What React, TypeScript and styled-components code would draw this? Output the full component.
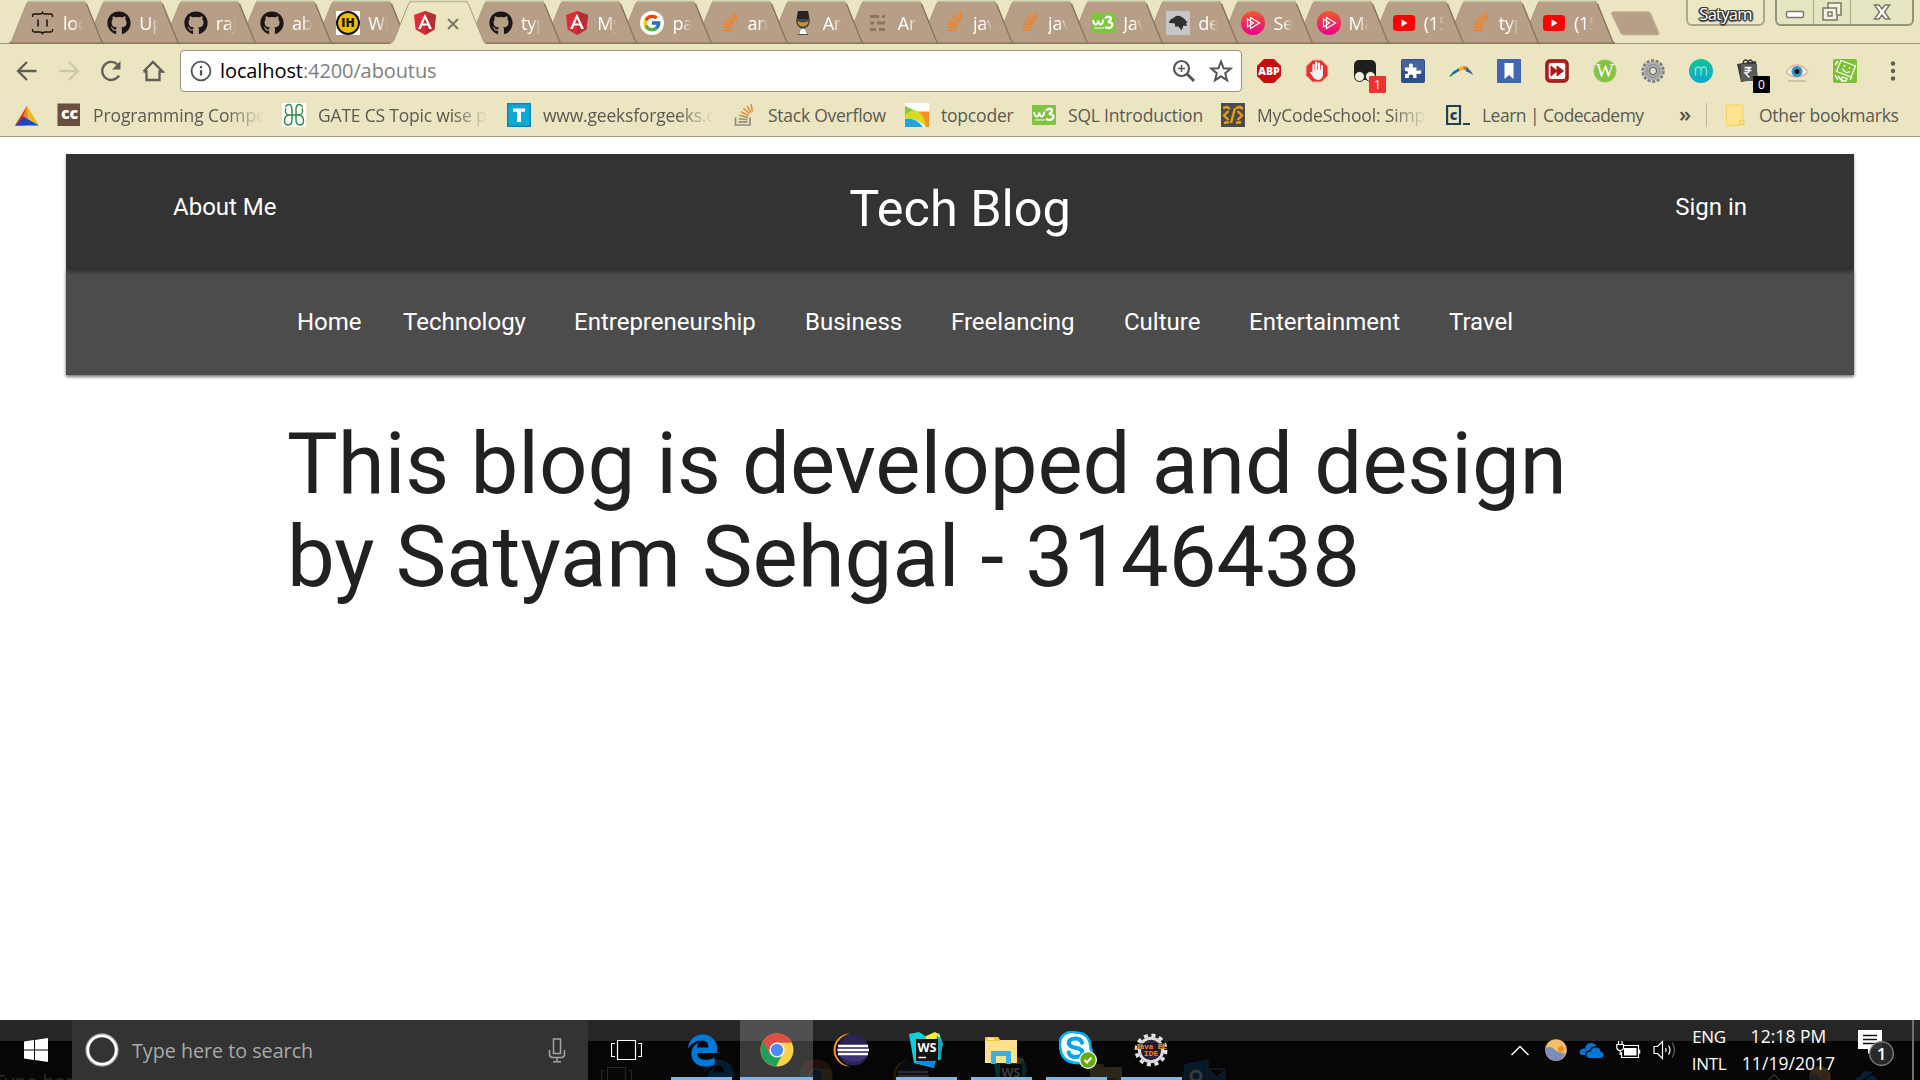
import React from "react";
import styled, { createGlobalStyle, css } from "styled-components";
import { FaGithub } from "react-icons/fa";
import { FaEdgeLegacy } from "react-icons/fa6";
import { FcGoogle } from "react-icons/fc";

const UI = `"Open Sans", "Noto Sans", sans-serif`;

const Global = createGlobalStyle`
  html, body { margin: 0; padding: 0; background: #fff; }
  * { box-sizing: border-box; }
  svg { display: block; flex: none; }
`;

const Screen = styled.div`
  width: 1920px;
  height: 1080px;
  display: flex;
  flex-direction: column;
  overflow: hidden;
  background: #fff;
`;

/* ---------- browser chrome ---------- */

const Chrome = styled.header`
  height: 137px;
  background: #ebe5c1;
  border-bottom: 1px solid #a49a80;
  font-family: ${UI};
  display: flex;
  flex-direction: column;
  flex: none;
`;

const TabStrip = styled.div`
  height: 44px;
  display: flex;
  padding-left: 8px;
  border-bottom: 1px solid #a09776;
  position: relative;
`;

const TabBox = styled.div<{ $w: number; $z: number }>`
  width: ${(p) => p.$w}px;
  height: 44px;
  flex: none;
  display: flex;
  align-items: flex-start;
  padding: 11px 0 0 23px;
  gap: 8px;
  position: relative;
  z-index: ${(p) => p.$z};
  & > :not(:first-child) { position: relative; }
`;

const TabShape = styled.svg`
  position: absolute;
  left: 0;
  top: 0;
`;

const TabTitle = styled.span`
  width: 20px;
  flex: none;
  overflow: hidden;
  white-space: nowrap;
  font-size: 18px;
  line-height: 24px;
  letter-spacing: -0.2px;
  color: #fff;
  mask-image: linear-gradient(90deg, #000 50%, transparent 100%);
`;

const CloseMark = styled.svg`
  margin: 7px 0 0 2px;
`;

const NewTab = styled.svg`
  margin: 11px 0 0 16px;
`;

const WindowControls = styled.div`
  margin-left: auto;
  padding-right: 6px;
  display: flex;
  gap: 10px;
`;

const Profile = styled.div`
  width: 79px;
  height: 26px;
  border: 2px solid #a9a88c;
  border-top: 0;
  border-radius: 0 0 6px 6px;
  background: #ece8c6;
  color: #fff;
  font-size: 16.5px;
  line-height: 27px;
  letter-spacing: -0.75px;
  text-align: center;
  text-shadow: -1px -1px 0 #333, 1px -1px 0 #333, -1px 1px 0 #333, 1px 1px 0 #333, 0 2px 1px #555, 2px 0 1px #555, -2px 0 1px #555;
`;

const WinButtons = styled.div`
  width: 139px;
  height: 26px;
  display: flex;
  border: 2px solid #8f947b;
  border-top: 0;
  border-radius: 0 0 6px 6px;
  background: #e5e5c0;
`;

const WinButton = styled.div<{ $w: number; $drop?: number }>`
  width: ${(p) => p.$w}px;
  display: flex;
  align-items: center;
  justify-content: center;
  padding-top: ${(p) => p.$drop ?? 0}px;
  & + & { border-left: 1px solid #a3a68a; }
`;

const Toolbar = styled.div`
  height: 54px;
  display: flex;
  align-items: center;
  padding: 0 13px 0 15px;
`;

const NavButtons = styled.div`
  display: flex;
  gap: 18px;
  width: 165px;
`;

const Omnibox = styled.div`
  width: 1062px;
  height: 42px;
  display: flex;
  align-items: center;
  background: #fff;
  border: 1px solid #98937a;
  border-radius: 4px;
  padding: 0 8px 0 9px;
`;

const Url = styled.div`
  margin-left: 8px;
  flex: 1;
  font-size: 20px;
  line-height: 40px;
  letter-spacing: -0.1px;
  color: #808080;
  b { font-weight: 400; color: #000; }
`;

const Extensions = styled.div`
  display: flex;
  margin-left: 15px;
`;

const Ext = styled.div`
  width: 48px;
  height: 42px;
  display: flex;
  align-items: center;
  position: relative;
`;

const ExtBadge = styled.span<{ $bg: string }>`
  position: absolute;
  left: 16px;
  top: 26px;
  width: 17px;
  height: 17px;
  border-radius: 1px;
  background: ${(p) => p.$bg};
  color: #fff;
  font-size: 12px;
  line-height: 18px;
  text-align: center;
`;

const Bookmarks = styled.div`
  height: 34px;
  display: flex;
  align-items: center;
  padding-left: 15px;
`;

const Bookmark = styled.div<{ $w: number; $gap?: number }>`
  width: ${(p) => p.$w}px;
  flex: none;
  display: flex;
  align-items: center;
  gap: ${(p) => p.$gap ?? 12}px;
`;

const BookmarkText = styled.span<{ $w: number; $ls: number; $fade?: boolean }>`
  width: ${(p) => p.$w}px;
  overflow: hidden;
  white-space: nowrap;
  font-size: 17.5px;
  line-height: 30px;
  letter-spacing: ${(p) => p.$ls}px;
  color: #5b5a52;
  ${(p) => p.$fade && css`mask-image: linear-gradient(90deg, #000 calc(100% - 36px), transparent 100%);`}
`;

const Overflow = styled.span`
  width: 27px;
  font-size: 22px;
  font-weight: 600;
  line-height: 28px;
  color: #55534b;
  padding-bottom: 4px;
`;

const Divider = styled.span`
  width: 1px;
  height: 24px;
  margin-right: 19px;
  background: #bdb697;
`;

/* ---------- blog page ---------- */

const Page = styled.main`
  height: 883px;
  flex: none;
  padding: 17px 66px 0;
  font-family: Roboto, sans-serif;
`;

const TopBar = styled.div`
  position: relative;
  height: 116px;
  display: grid;
  grid-template-columns: 1fr auto 1fr;
  background: #333;
  color: #fff;
  padding: 0 107px;
  box-shadow: 0 2px 3px rgba(0, 0, 0, 0.35);
`;

const TopLink = styled.a<{ $end?: boolean }>`
  font-size: 24px;
  line-height: 28px;
  padding-top: 39px;
  justify-self: ${(p) => (p.$end ? "end" : "start")};
`;

const Brand = styled.h1`
  margin: 0;
  font-size: 50.4px;
  font-weight: 400;
  line-height: 58px;
  padding-top: 26px;
`;

const NavBar = styled.nav`
  height: 105px;
  display: flex;
  background: #4c4c4c;
  color: #fff;
  padding: 38px 0 0 231px;
  box-shadow: 0 2px 3px rgba(0, 0, 0, 0.5), 0 0 3px rgba(0, 0, 0, 0.15);
`;

const NavItem = styled.a<{ $w: number }>`
  width: ${(p) => p.$w}px;
  flex: none;
  font-size: 24px;
  line-height: 28px;
  white-space: nowrap;
`;

const Headline = styled.h2`
  margin: 43px 0 0 221px;
  width: 1330px;
  font-size: 85.12px;
  font-weight: 400;
  line-height: 93px;
  color: #212121;
`;

/* ---------- taskbar ---------- */

const Taskbar = styled.footer`
  height: 60px;
  flex: none;
  display: flex;
  position: relative;
  overflow: hidden;
  background: linear-gradient(#262626 0 21px, #060606 21px);
  font-family: ${UI};
  color: #fff;
`;

const StartButton = styled.div`
  width: 72px;
  display: flex;
  align-items: center;
  justify-content: center;
`;

const Search = styled.div`
  width: 516px;
  display: flex;
  align-items: center;
  background: #333;
  padding: 0 22px 0 13px;
  position: relative;
`;

const SearchText = styled.span`
  flex: 1;
  margin-left: 13px;
  font-size: 19.7px;
  line-height: 30px;
  letter-spacing: 0;
  color: #a9a9a9;
  padding-top: 2px;
`;

const TaskButton = styled.div<{ $w: number; $open?: boolean; $active?: boolean; $inset?: number; $nudge?: number }>`
  width: ${(p) => p.$w}px;
  display: flex;
  align-items: center;
  justify-content: center;
  padding-left: ${(p) => p.$nudge ?? 0}px;
  position: relative;
  ${(p) => p.$active && css`background: linear-gradient(#505050 0 21px, #3a3a3a 21px);`}
  ${(p) =>
    p.$open &&
    css`
      &::after {
        content: "";
        position: absolute;
        bottom: 0;
        left: ${p.$active ? 0 : p.$inset ?? 8}px;
        width: ${p.$active ? p.$w : 61}px;
        height: 3px;
        background: #76b9ed;
      }
    `}
`;

const Tray = styled.div`
  margin-left: auto;
  display: flex;
  align-items: center;
`;

const TrayIcon = styled.div<{ $w: number }>`
  width: ${(p) => p.$w}px;
  display: flex;
`;

const TrayText = styled.div<{ $w: number; $ls: number; $size: number; $pad?: number }>`
  width: ${(p) => p.$w}px;
  padding-right: ${(p) => p.$pad ?? 0}px;
  font-size: ${(p) => p.$size}px;
  line-height: 27px;
  letter-spacing: ${(p) => p.$ls}px;
  text-align: center;
  white-space: nowrap;
`;

const ShowDesktop = styled.div`
  width: 8px;
  align-self: stretch;
  border-left: 2px solid #707070;
`;

const Reflection = styled.div<{ $x: number; $y: number; $o?: number }>`
  position: absolute;
  left: ${(p) => p.$x}px;
  top: ${(p) => p.$y}px;
  opacity: ${(p) => p.$o ?? 0.15};
  font-size: 19.5px;
  line-height: 24px;
  white-space: nowrap;
`;

/* ---------- drawings ---------- */

const Svg = ({ s = 24, w, children, vb = "0 0 24 24" }: { s?: number; w?: number; vb?: string; children: React.ReactNode }) => (
  <svg width={w ?? s} height={s} viewBox={vb} fill="none">{children}</svg>
);

const Github = () => <FaGithub size={24} color="#181616" />;

const Angular = () => (
  <Svg>
    <path d="M12 0 23 4 21.400 18.500 12 24 2.600 18.500 1 4Z" fill="#dd2c38" />
    <path d="M12 0 23 4 21.400 18.500 12 24Z" fill="#b52e31" />
    <path d="M12 2.700 5 18H7.800L9.300 14.600H14.700L16.200 18H19ZM12 7.500 14 12.500H10Z" fill="#fff" fillRule="evenodd" />
  </Svg>
);

const Google = () => (
  <Svg>
    <circle cx="12" cy="12" r="12" fill="#fff" />
    <svg x="2" y="2" width="20" height="20" viewBox="0 0 48 48"><FcGoogle size={48} /></svg>
  </Svg>
);

const StackOverflow = ({ pale }: { pale?: boolean }) => (
  <Svg>
    {pale ? (
      <path d="M3.500 14.500V22H18V14.500" stroke="#8f8a84" strokeWidth="1.700" />
    ) : (
      <path d="M4 17V21.500H17.500V17" stroke="#a5a3a6" strokeWidth="1.400" />
    )}
    <g stroke={pale ? "#a58f68" : "#f48024"} strokeWidth="1.600">
      <path d="M6.500 19H15.500" stroke={pale ? "#8d8577" : "#f48024"} />
      <path d="M6.700 15.700 15.600 16.800M7.500 12.200 16 14.700" />
    </g>
    <g stroke={pale ? "#e0933a" : "#f48024"} strokeWidth="1.600"><path d="M9 8.700 16.600 12.800M11.500 5.300 17.700 10.800M15 2.800 19 9.700M19 1 20.500 8.500" /></g>
  </Svg>
);

const Brackets = () => (
  <Svg>
    <path d="M1.500 6V4.500Q1.500 3 3.500 3H9Q11 3 11.500 1.500Q12 3 14 3H19.500Q21.500 3 21.500 4.500V6M1.500 18V19.500Q1.500 21 3.500 21H9Q11 21 11.500 22.500Q12 21 14 21H19.500Q21.500 21 21.500 19.500V18" stroke="#16110e" strokeWidth="1.300" />
    <path d="M7 8.500V15.500M16 8.500V15.500" stroke="#16110e" strokeWidth="1.500" />
  </Svg>
);

const Letters = ({ x = 12, y, size, fill = "#fff", weight = 700, children, font = "Open Sans" }: any) => (
  <text x={x} y={y} fontSize={size} fill={fill} fontWeight={weight} fontFamily={font} textAnchor="middle">{children}</text>
);

const IndieHack = () => (
  <Svg>
    <rect width="24" height="24" fill="#fff" />
    <circle cx="12" cy="12" r="11" fill="#f2bb05" stroke="#111" strokeWidth="2" />
    <Letters y="16.300" size="12" fill="#111" weight={800}>IH</Letters>
  </Svg>
);

const Lamp = () => (
  <Svg>
    <path d="M7 0H17L19 10Q18 16 14 17L17 24H7L10 17Q6 16 5 10Z" fill="#4a4642" />
    <path d="M7 0H17L18 8H6Z" fill="#262424" />
    <path d="M6.500 10Q12 13 17.500 10Q17 15 12 15.500Q7 15 6.500 10" fill="#c8952d" />
    <path d="M8 23 9.500 18.500Q12 16.500 14.500 18.500L16 23Z" fill="#fff" />
  </Svg>
);

const Dashes = () => (
  <Svg>
    <path d="M4 5.500H13M16 5.500H19M4 12H8M11 12H19M4 18.500H10M13 18.500H19" stroke="#8a7565" strokeWidth="2.800" />
  </Svg>
);

const W3 = () => (
  <Svg>
    <rect y="2" width="24" height="20" rx="1" fill="#80c341" />
    <path d="M2 9Q3 14 5 13.500Q7 13 7.300 9.500Q8 14 10 13.500Q12 12.500 12.300 8.500" stroke="#fff" strokeWidth="1.900" />
    <path d="M14 7.500Q17 4.500 19.500 6.500Q21 9.500 17 11Q22 11 21.300 14.500Q19.500 18.500 14 16" stroke="#fff" strokeWidth="2.300" />
    <path d="M3 17H13" stroke="#fff" strokeWidth=".9" />
  </Svg>
);

const Bird = () => (
  <Svg>
    <rect width="24" height="24" fill="#c6c5c7" />
    <path d="M3 12Q3.500 8 7.500 7Q10 4 14 5L18 7.500 21.500 11.500 20 12 21 15 17.500 14.500 15.500 19.500 12.500 15.500 9 15.500 9 12.500 5 12Z" fill="#303033" />
  </Svg>
);

const Pluralsight = () => (
  <Svg>
    <defs><linearGradient id="ps" x1="0" y1="0" x2="0" y2="1"><stop stopColor="#f15b2a" /><stop offset="1" stopColor="#ec008c" /></linearGradient></defs>
    <circle cx="12" cy="12" r="12" fill="url(#ps)" />
    <path d="M9.500 6.500 18.500 12 9.500 17.500ZM6.500 8V16L12.500 12Z" stroke="#fff" strokeWidth="1.200" />
  </Svg>
);

const Youtube = () => (
  <Svg>
    <rect x="1" y="4" width="22" height="16" rx="3.500" fill="#f00" />
    <path d="M9.500 8.300 15.500 12 9.500 15.700Z" fill="#fff" />
  </Svg>
);

const GG = () => (
  <Svg>
    <rect width="24" height="24" fill="#fff" />
    <path d="M3.500 4Q5 1 7.500 1.500Q10 2.500 10 7V16Q10 22 6.500 22Q2.500 22 2.500 18Q2.500 12.500 7 12H17Q21.500 12.500 21.500 18Q21.500 22 17.500 22Q14 22 14 16V7Q14 2.500 16.500 1.500Q19 1 20.500 4" stroke="#2f8d46" strokeWidth="1.500" />
    <path d="M4 5Q2 11 7 12M20 5Q22 11 17 12" stroke="#2f8d46" strokeWidth="1.300" />
  </Svg>
);

const Topcoder = () => (
  <Svg>
    <rect width="24" height="24" fill="#fff" />
    <path d="M0 3Q10 6 17 15L10 12 0 14Z" fill="#8cc43c" />
    <path d="M13 8.500H24V24H20Q19 15 13 8.500" fill="#f7901e" />
    <path d="M0 12Q8 5 14 9Q20 14 21 24Q12 14 0 16Z" fill="#d3dd26" />
    <path d="M0 16Q11 14 18 24H0Z" fill="#24a4dc" />
  </Svg>
);

const Prism = () => (
  <Svg>
    <path d="M12 3 0 22.500H10L12 12Z" fill="#d42a1d" />
    <path d="M12 3 24 22.500 14.500 17Z" fill="#f0b61c" />
    <path d="M12 3 8 13 14 17.500Z" fill="#f08a1a" />
    <path d="M0 22.500 9 14 24 22.500Z" fill="#1a45c8" />
  </Svg>
);

const CC = () => (
  <Svg>
    <rect x=".5" y=".5" width="22.500" height="22.500" fill="#6b4f3e" />
    <Letters x={12.500} y="16.300" size="16" weight={800}>cc</Letters>
  </Svg>
);

const TLetter = () => (
  <Svg>
    <rect x=".75" y=".75" width="22.500" height="22.500" fill="#0fa9d8" stroke="#0b86b4" strokeWidth="1.500" />
    <path d="M6 5.500H18V8.800H14V19H10V8.800H6Z" fill="#fff" />
  </Svg>
);

const CodeSchool = () => (
  <Svg>
    <rect width="24" height="24" fill="#4a4b4d" />
    <path d="M2 5 6 4 9 6M15 5 19 4 22 6M3 20 8 19M15 20 20 19" stroke="#e79d12" strokeWidth="2.600" />
    <path d="M7.500 8 3 12.500 7.500 17M16.500 8 21 12.500 16.500 17M14 5 10 20" stroke="#e79d12" strokeWidth="2.400" />
  </Svg>
);

const Codecademy = () => (
  <Svg>
    <path d="M1.100 3H14V21H1.100Z" stroke="#204056" strokeWidth="2.200" />
    <path d="M17 21H24" stroke="#204056" strokeWidth="2" />
    <Letters x={7.500} y="16.500" size="14" fill="#204056" weight={800}>c</Letters>
  </Svg>
);

const FolderMini = () => (
  <Svg>
    <path d="M.5 2H17V18.500L13 22.500H.5Z" fill="#ffe48f" stroke="#f5d262" />
    <path d="M14 17.500Q17.500 16 18 18V21.500H13.500Z" fill="#ffe48f" stroke="#ecc23e" />
  </Svg>
);

const octagon = "M7 0H17L24 7V17L17 24H7L0 17V7Z";

const extensionIcons: { icon: React.ReactNode; badge?: [string, string] }[] = [
  { icon: <Svg><path d={octagon} fill="#c70d0d" /><Letters y="16" size="10.500" weight={800}>ABP</Letters></Svg> },
  {
    icon: (
      <Svg>
        <path d="M7.500 1H16.500L23 7.500V16.500L16.500 23H7.500L1 16.500V7.500Z" fill="#e5302b" stroke="#f6b8a8" />
        <path d="M8.500 13V6M11.300 12V3.500M14.100 12V4.500M16.900 13V7" stroke="#fff" strokeWidth="2.100" strokeLinecap="round" />
        <path d="M7.500 11H18V16Q17 21 13 21Q10 21 8 18L5 13.500Q6 12 8 14Z" fill="#f4f4f4" />
      </Svg>
    ),
  },
  {
    badge: ["#ee3131", "1"],
    icon: <Svg><rect x="1" y="1" width="22" height="20" rx="5" fill="#1e1e1e" /><circle cx="6.500" cy="17.500" r="5" fill="#f2efe0" stroke="#1e1e1e" /><circle cx="17.500" cy="17.500" r="5" fill="#f2efe0" stroke="#1e1e1e" /></Svg>,
  },
  {
    icon: (
      <Svg>
        <rect width="24" height="24" rx="2" fill="#2f4f8f" /><rect x="1" y="1" width="22" height="11" rx="1" fill="#43659f" />
        <path d="M4 8.500H8.500Q7 4.500 10 4.500Q13 4.500 11.500 8.500H15.500V12Q20.500 10 20.500 13Q20.500 16 15.500 14.500V19H12Q13 15.500 10 15.500Q7 15.500 8 19H4V15Q7 15.500 7 13.500Q7 11.500 4 12Z" fill="#fff" />
      </Svg>
    ),
  },
  {
    icon: (
      <Svg>
        <path d="M1 17.500Q4 13.500 10 10.500" stroke="#2a9d55" strokeWidth="2" />
        <path d="M3 12.500Q5.500 10 9 9.500" stroke="#1767b2" strokeWidth="0" />
        <path d="M4 14.500Q7 12 10.500 10.300" stroke="#1767b2" strokeWidth="2.500" />
        <path d="M10 10.500Q12 9.300 14.500 9" stroke="#f4b21c" strokeWidth="3.400" />
        <path d="M14.300 9Q17 8.800 18.500 10.300" stroke="#e8632e" strokeWidth="3.400" />
        <path d="M17.500 8.500Q22 11 24 16Q20.500 13 17 12.500Z" fill="#1767b2" />
      </Svg>
    ),
  },
  { icon: <Svg><rect width="24" height="24" fill="#4066b4" /><path d="M7.500 4H16.500V20L12 16 7.500 20Z" fill="#fff" /></Svg> },
  {
    icon: (
      <Svg>
        <rect x="1" y="1" width="22" height="22" rx="4" fill="#c02020" stroke="#8b1515" strokeWidth="1.500" />
        <rect x="3.800" y="4" width="16.400" height="16" rx="2" fill="#fff" />
        <path d="M6 7 12 12 6 17ZM12 7 18.500 12 12 17Z" fill="#a81818" stroke="#a81818" />
      </Svg>
    ),
  },
  { icon: <Svg><circle cx="12" cy="12" r="11.200" fill="#82c341" stroke="#a9cc74" strokeWidth=".8" /><Letters y="18.300" size="19" weight={400} font="Liberation Serif">W</Letters></Svg> },
  {
    icon: (
      <Svg>
        <circle cx="12" cy="12" r="10" stroke="#7c7c7c" strokeWidth="3.500" strokeDasharray="3 1.490" />
        <circle cx="12" cy="12" r="6.500" stroke="#adadad" strokeWidth="6" />
        <circle cx="12" cy="12" r="6.500" stroke="#8b8b8b" strokeWidth="1" />
        <circle cx="12" cy="12" r="3.500" stroke="#666" strokeWidth="1.200" fill="#e4dfca" />
      </Svg>
    ),
  },
  {
    icon: (
      <Svg>
        <defs><linearGradient id="mm" x1="0" y1="0" x2="0" y2="1"><stop stopColor="#0fc29c" /><stop offset="1" stopColor="#11a8cf" /></linearGradient></defs>
        <circle cx="12" cy="12" r="12" fill="url(#mm)" />
        <path d="M6.500 16.500V8.500M6.500 11Q7 8 9.500 8Q12 8 12 11V16.500M12 11Q12.500 8 15 8Q17.500 8 17.500 11V16.500" stroke="#7be6df" strokeWidth="1.300" />
      </Svg>
    ),
  },
  {
    badge: ["#000", "0"],
    icon: (
      <Svg>
        <path d="M0 5 19 2 21 20 4 23Z" fill="#3c3c3c" /><path d="M4 5H20V22H4Z" fill="#5a5a5a" />
        <path d="M6 5Q6 1 9 1Q11 1 11 5M11 5Q11 1 14 1Q16 2 16 5" stroke="#333" strokeWidth="1.300" />
        <path d="M7.500 8.500H14.500M7.500 11.500H14.500M7.500 8.500Q12.500 8.500 12.500 11Q12.500 14 8 14L12.500 18.500" stroke="#fff" strokeWidth="1.400" />
      </Svg>
    ),
  },
  {
    icon: (
      <Svg>
        <path d="M1 13Q6 6 12 6Q18 6 23 13Q18 18 12 18Q6 18 1 13" fill="#f3efe6" stroke="#d6b49b" strokeWidth="1.300" />
        <circle cx="12" cy="12.500" r="5.500" fill="#3c93c2" /><circle cx="12" cy="12.500" r="2.500" fill="#0a1b28" />
        <path d="M3 22H21" stroke="#c9c4aa" strokeWidth="2" />
      </Svg>
    ),
  },
  {
    icon: (
      <Svg>
        <rect width="24" height="24" rx="2" fill="#7dbf36" />
        <path d="M8 1.500 22.500 7 18 18 3.500 12.500Z" stroke="#fff" strokeWidth="1.300" />
        <path d="M9.500 9.500Q12 15.500 17 12.500M11.500 6V8M16.500 8V10M2 16 5 21M5 17 9 22M9 18 14 19.500 13 22H9ZM17 21 19 18M2 6 5 2" stroke="#fff" strokeWidth="1.300" />
      </Svg>
    ),
  },
];

const EdgeIcon = () => <FaEdgeLegacy size={33} color="#0078d7" />;

const ChromeIcon = () => (
  <Svg s={34} vb="0 0 34 34">
    <circle cx="17" cy="17" r="16.500" fill="#fdd249" />
    <path d="M17 17 3 8.500A16.500 16.500 0 0 0 16 33.500L23 20Z" fill="#1fa15d" />
    <path d="M2.700 8.800A16.500 16.500 0 0 1 32 9.700H17L10 21Z" fill="#dd5145" />
    <circle cx="17" cy="17" r="7.600" fill="#fff" /><circle cx="17" cy="17" r="6.200" fill="#4c8bf5" />
  </Svg>
);

const EclipseIcon = () => (
  <Svg s={34} w={36} vb="0 0 36 34">
    <path d="M17 .5A16.500 16.500 0 0 0 17 33.500A19 17 0 0 1 17 .5" fill="#f7941e" />
    <circle cx="20.500" cy="17" r="15.500" fill="#2c2255" />
    <path d="M6 20H35Q32 28 21 29Q9 28 6 20" fill="#40327a" />
    <path d="M5 13H35M4.500 17H36M5 21H35" stroke="#fff" strokeWidth="2.300" />
  </Svg>
);

const WebStormIcon = () => (
  <Svg s={36} w={34} vb="0 0 34 36">
    <path d="M0 2 10 0 18 5 30 1 34 12 31 20 32 27 26 30 25 36 5 31Z" fill="#12cdd4" />
    <path d="M17 4 26 0 31 3 28 12H16Z" fill="#f3ec3f" /><path d="M28 3 34 12 31 27 26 20Z" fill="#14a7b8" />
    <path d="M5 30 25 28V36Z" fill="#0a86e8" />
    <rect x="7" y="7" width="22" height="22" fill="#111" />
    <Letters x={18} y="19.500" size="12.500">WS</Letters>
    <path d="M9.500 25.500H17" stroke="#fff" strokeWidth="1.500" />
  </Svg>
);

const FolderIcon = () => (
  <Svg s={27} w={32} vb="0 0 32 27">
    <path d="M0 1.500Q0 0 1.500 0H13L15 3H32V26H0Z" fill="#fce08a" />
    <path d="M0 1.500Q0 0 1.500 0H13L15 4H0Z" fill="#f8c43a" /><path d="M2.500 2H9" stroke="#fff" strokeWidth="1.400" />
    <path d="M6 27V14H26V27H21V19H11V27Z" fill="#36b2ea" />
  </Svg>
);

const SkypeIcon = () => (
  <Svg s={38} w={38} vb="0 0 38 38">
    <path d="M9 1.500Q14 0 17 1.500Q31 2 31.500 17Q34 21 31.500 28Q27 34 20 32Q3 32 1.500 18Q-1.500 5 9 1.500" fill="#fff" stroke="#00aff0" strokeWidth="2.600" />
    <path d="M23 11.500Q21.500 7.500 16.500 7.500Q10 7.500 9.800 12Q9.800 15.500 16.500 16.700Q23.500 18 23.500 21.500Q23 26 16.500 26Q11 26 9.800 21.500" stroke="#00a5e8" strokeWidth="4.200" strokeLinecap="round" />
    <circle cx="29" cy="29" r="8.300" fill="#63ab0f" stroke="#fff" strokeWidth="1.300" />
    <path d="M25.500 29 28 31.500 32.500 26.500" stroke="#fff" strokeWidth="2" />
  </Svg>
);

const JavaIcon = () => (
  <Svg s={34} w={34} vb="0 0 34 34">
    <circle cx="17" cy="17" r="14.700" stroke="#e4e4e4" strokeWidth="3.500" strokeDasharray="4 3.700" />
    <circle cx="17" cy="17" r="11.700" fill="#2a2440" stroke="#dadada" strokeWidth="3" />
    <path d="M3 10H31V16H26V23H9V16H3Z" fill="#1a1320" opacity=".65" />
    <Letters x={17} y="15.500" size="7.500" fill="#f58a1f" font="Liberation Mono">Java EE</Letters>
    <Letters x={17} y="23" size="8" fill="#f58a1f" font="Liberation Mono">IDE</Letters>
  </Svg>
);

const TaskViewIcon = () => (
  <Svg s={20} w={31} vb="0 0 31 20"><path d="M6.500.5H24.500V19.500H6.500ZM4 3.500H.5V16.500H4M27 3.500H30.500V16.500H27" stroke="#fff" strokeWidth="1.200" /></Svg>
);

const ChevronIcon = () => <Svg s={11} w={20} vb="0 0 20 11"><path d="M1.500 10 10 1.500 18.500 10" stroke="#fff" strokeWidth="1.500" /></Svg>;

const SphereIcon = () => (
  <Svg s={22} w={22} vb="0 0 22 22"><circle cx="11" cy="11" r="10.800" fill="#f4bf68" /><circle cx="16" cy="10" r="3" fill="#ee8b26" /><path d="M.3 9.500Q6 6 10 11Q15 15 20.500 14Q18 21.500 11 21.800Q1 21.500.3 9.500" fill="#7b8fba" /></Svg>
);

const CloudIcon = () => (
  <Svg s={16} w={25} vb="0 0 25 16">
    <path d="M2 13Q-1 10 2 7.500Q4 6 6 6.500Q7 1 12 1Q16 1 17.500 4Q12 4 11 8Q6 9 6.500 13Z" fill="#0a6fd0" />
    <path d="M10 16Q7 15 7.500 12Q8.500 9.500 11.500 9.800Q13 5 17.500 5.500Q21 6 21.500 9.500Q25 10.500 24.500 13.500Q24 16 21 16Z" fill="#0078d7" />
  </Svg>
);

const BatteryIcon = () => (
  <Svg s={18} w={26} vb="0 0 26 18">
    <path d="M8 4.500H22.500V16.500H5.500V11" stroke="#fff" strokeWidth="1.200" /><rect x="8" y="7" width="12.500" height="7.500" fill="#fff" /><path d="M23.500 8.500V12.500" stroke="#fff" strokeWidth="1.500" />
    <path d="M2.500 0V3M6 0V3M.8 3.500H7.500V7Q7 9.500 4.200 9.500Q1.500 9.500.8 7ZM4.200 9.500V14" stroke="#fff" strokeWidth="1.200" />
  </Svg>
);

const VolumeIcon = () => (
  <Svg s={20} w={23} vb="0 0 23 20">
    <path d="M1 6.500H4.500L9.500 1.500V18.500L4.500 13.500H1Z" stroke="#fff" strokeWidth="1.200" />
    <path d="M12.500 8Q13.800 10 12.500 12M15.500 5.500Q18.500 10 15.500 14.500" stroke="#fff" strokeWidth="1.200" /><path d="M19 2.500Q24 10 19 17.500" stroke="#666" strokeWidth="1.200" />
  </Svg>
);

const NoticeIcon = () => (
  <Svg s={40} w={38} vb="0 0 38 40">
    <path d="M0 0H24V19H15L10 24V19H0Z" fill="#fff" /><path d="M5 5.500H19M5 9.500H19M5 13.500H19" stroke="#111" strokeWidth="1.300" />
    <circle cx="23.500" cy="23.500" r="11.800" fill="#2b2b2b" fillOpacity=".94" stroke="#8b8b8b" strokeWidth="1.200" />
    <Letters x={23.500} y="29.500" size="17" weight={600}>1</Letters>
  </Svg>
);

/* ---------- data ---------- */

const so = <StackOverflow />;
const tabs: { icon: React.ReactNode; title: string; active?: boolean }[] = [
  { icon: <Brackets />, title: "loc" },
  { icon: <Github />, title: "Up" },
  { icon: <Github />, title: "raj" },
  { icon: <Github />, title: "ab" },
  { icon: <IndieHack />, title: "Wl" },
  { icon: <Angular />, title: "", active: true },
  { icon: <Github />, title: "typ" },
  { icon: <Angular />, title: "My" },
  { icon: <Google />, title: "pa" },
  { icon: so, title: "an" },
  { icon: <Lamp />, title: "Ar" },
  { icon: <Dashes />, title: "Ar" },
  { icon: so, title: "jav" },
  { icon: so, title: "jav" },
  { icon: <W3 />, title: "Jav" },
  { icon: <Bird />, title: "de" },
  { icon: <Pluralsight />, title: "Se" },
  { icon: <Pluralsight />, title: "Ma" },
  { icon: <Youtube />, title: "(15" },
  { icon: so, title: "typ" },
  { icon: <Youtube />, title: "(15" },
];

const bookmarks = [
  { icon: <CC />, title: "Programming Compe", w: 225, tw: 170, ls: -0.1, fade: true },
  { icon: <GG />, title: "GATE CS Topic wise p", w: 225, tw: 170, ls: -0.2, fade: true },
  { icon: <TLetter />, title: "www.geeksforgeeks.o", w: 225, tw: 170, ls: -0.2, fade: true },
  { icon: <StackOverflow pale />, title: "Stack Overflow", w: 173, tw: 125, ls: -0.25 },
  { icon: <Topcoder />, title: "topcoder", w: 127, tw: 80, ls: -0.2 },
  { icon: <W3 />, title: "SQL Introduction", w: 189, tw: 142, ls: -0.2 },
  { icon: <CodeSchool />, title: "MyCodeSchool: Simp", w: 225, tw: 170, ls: -0.15, fade: true },
  { icon: <Codecademy />, title: "Learn | Codecademy", w: 233, tw: 175, ls: -0.52 },
];

const navItems: [string, number][] = [
  ["Home", 106],
  ["Technology", 171],
  ["Entrepreneurship", 231],
  ["Business", 146],
  ["Freelancing", 173],
  ["Culture", 125],
  ["Entertainment", 200],
  ["Travel", 80],
];

function Tab({ icon, title, active, index }: { icon: React.ReactNode; title: string; active?: boolean; index: number }) {
  const shape = "M0 43.500Q2.500 43 4 40L18.500 4Q19.500 1.500 22 1.500H75Q77.500 1.500 78.500 4L93 40Q94 43 96 43.500";
  return (
    <TabBox $w={index < 7 ? 76.33 : 75.14} $z={active ? 60 : 40 - index}>
      <TabShape width="97" height="44" viewBox="0 0 97 44" fill="none">
        <path d={shape + "V44H0Z"} fill={active ? "#ebe5c1" : "#b79e86"} />
        <path d={shape} stroke={active ? "#a59c7d" : "#a39c80"} />
        {!active && <path d="M78.500 4 93 40Q94 43 96 43.300H2" stroke="#8b7460" strokeWidth="1.400" />}
        <path d="M19.500 1.500H77.500" stroke="#b9bd98" strokeWidth="1.500" />
      </TabShape>
      {icon}
      {active ? (
        <CloseMark width="12" height="12" viewBox="0 0 12 12"><path d="M1 1 11 11M11 1 1 11" stroke="#7d7968" strokeWidth="2" /></CloseMark>
      ) : (
        <TabTitle>{title}</TabTitle>
      )}
    </TabBox>
  );
}

const ink = "#5f5e59";

export default function App() {
  return (
    <Screen>
      <Global />
      <Chrome>
        <TabStrip>
          {tabs.map((t, i) => <Tab key={i} index={i} {...t} />)}
          <NewTab width="50" height="26" viewBox="0 0 50 26">
            <path d="M3 .7H38Q40 .7 41 3L49 22Q49.500 24 47 24H14Q11.500 24 10.500 22L1.500 3Q1 1 3 .7" fill="#b79e86" stroke="#c9b99a" />
          </NewTab>
          <WindowControls>
            <Profile>Satyam</Profile>
            <WinButtons>
              <WinButton $w={36} $drop={5}><Svg s={10} w={20} vb="0 0 20 10"><rect x="1.500" y="1.500" width="17" height="6" rx="1.500" fill="#fff" stroke="#77796a" strokeWidth="1.500" /></Svg></WinButton>
              <WinButton $w={37}>
                <Svg s={20} w={20} vb="0 0 20 20"><path d="M6 1H19V13H15V18H1V6H6Z" fill="#f5f5e2" stroke="#77796a" strokeWidth="1.500" /><path d="M6 6H14.500V13M6 10H10V14H6Z" stroke="#77796a" strokeWidth="1.500" /></Svg>
              </WinButton>
              <WinButton $w={62}>
                <Svg s={18} w={18} vb="0 0 18 18"><path d="M1.500 2H6L9 6 12 2H16.500L11.500 9 16.500 16H12L9 12 6 16H1.500L6.500 9Z" fill="#fff" stroke="#77796a" strokeWidth="1.500" /></Svg>
              </WinButton>
            </WinButtons>
          </WindowControls>
        </TabStrip>

        <Toolbar>
          <NavButtons>
            <Svg><path d="M21.500 12H3M12 3 3 12 12 21" stroke={ink} strokeWidth="2.300" /></Svg>
            <Svg><path d="M2.500 12H21M12 3 21 12 12 21" stroke="#cdc8a9" strokeWidth="2.300" /></Svg>
            <Svg><path d="M20 16.500A9 9 0 1 1 18.500 5.500" stroke={ink} strokeWidth="2.300" /><path d="M21.500 2V10.500H13Z" fill={ink} /></Svg>
            <Svg><path d="M5.500 12V21H18.500V12M2.500 12.500 12 3 21.500 12.500H17.500M2.500 12.500H6.500" stroke={ink} strokeWidth="2.300" /></Svg>
          </NavButtons>
          <Omnibox>
            <Svg s={22}><circle cx="12" cy="12" r="10.300" stroke="#555" strokeWidth="2" /><path d="M12 10.800V17M12 6.500V9" stroke="#555" strokeWidth="2.400" /></Svg>
            <Url><b>localhost</b>:4200/aboutus</Url>
            <Svg s={24}><circle cx="9.500" cy="9.500" r="7.500" stroke="#555" strokeWidth="2.200" /><path d="M15 15 22 22" stroke="#555" strokeWidth="3" /><path d="M6 9.500H13M9.500 6V13" stroke="#555" strokeWidth="1.500" /></Svg>
            <Svg s={24} w={37} vb="-13 0 37 24"><path d="M12 2.500 14.600 9.300 21.700 9.700 16.200 14.200 18 21.300 12 17.300 6 21.300 7.800 14.200 2.300 9.700 9.400 9.300Z" stroke="#555" strokeWidth="2" /></Svg>
          </Omnibox>
          <Extensions>
            {extensionIcons.map((e, i) => (
              <Ext key={i}>{e.icon}{e.badge && <ExtBadge $bg={e.badge[0]}>{e.badge[1]}</ExtBadge>}</Ext>
            ))}
          </Extensions>
          <Svg><g fill={ink}><circle cx="12" cy="4.500" r="2.200" /><circle cx="12" cy="12" r="2.200" /><circle cx="12" cy="19.500" r="2.200" /></g></Svg>
        </Toolbar>

        <Bookmarks>
          <Bookmark $w={42}><Prism /></Bookmark>
          {bookmarks.map((b) => (
            <Bookmark key={b.title} $w={b.w}>
              {b.icon}
              <BookmarkText $w={b.tw} $ls={b.ls} $fade={b.fade}>{b.title}</BookmarkText>
            </Bookmark>
          ))}
          <Overflow>»</Overflow>
          <Divider />
          <Bookmark $w={180} $gap={9}>
            <FolderMini />
            <BookmarkText $w={145} $ls={-0.27}>Other bookmarks</BookmarkText>
          </Bookmark>
        </Bookmarks>
      </Chrome>

      <Page>
        <TopBar>
          <TopLink>About Me</TopLink>
          <Brand>Tech Blog</Brand>
          <TopLink $end>Sign in</TopLink>
        </TopBar>
        <NavBar>
          {navItems.map(([label, w]) => <NavItem key={label} $w={w}>{label}</NavItem>)}
        </NavBar>
        <Headline>This blog is developed and design<br />by Satyam Sehgal - 3146438</Headline>
      </Page>

      <Taskbar>
        <Reflection $x={-6} $y={50}>Type here</Reflection>
        <Reflection $x={601} $y={47} $o={0.13}><TaskViewIcon /></Reflection>
        <Reflection $x={702} $y={39} $o={0.2}><EdgeIcon /></Reflection>
        <Reflection $x={893} $y={39}><EclipseIcon /></Reflection>
        <Reflection $x={993} $y={37} $o={0.2}><WebStormIcon /></Reflection>
        <Reflection $x={1090} $y={44} $o={0.15}><FolderIcon /></Reflection>
        <Reflection $x={1184} $y={40} $o={0.2}>
          <Svg s={30} w={42} vb="0 0 42 30"><path d="M0 5 24 0V30H0ZM25 9H41V26H25M25 10 33 17 41 10" fill="#0d5fb0" stroke="#4a84b8" /><circle cx="12" cy="16" r="5" stroke="#fff" strokeWidth="3" /></Svg>
        </Reflection>
        <Reflection $x={1764} $y={53}><ChevronIcon /></Reflection>
        <Reflection $x={1809} $y={46} $o={0.2}><SphereIcon /></Reflection>
        <Reflection $x={1855} $y={50} $o={0.25}><CloudIcon /></Reflection>

        <StartButton>
          <Svg><path d="M0 3.500 10 2V11.400H0ZM11 1.900 24 0V11.400H11ZM0 12.500H10V22L0 20.500ZM11 12.500H24V24L11 22.100Z" fill="#fff" /></Svg>
        </StartButton>
        <Search>
          <Svg s={34}><circle cx="12" cy="12" r="11" stroke="#999" strokeWidth="1.500" /><circle cx="12" cy="12" r="10" stroke="#fff" strokeWidth="2" /></Svg>
          <SearchText>Type here to search</SearchText>
          <Svg s={25} w={18} vb="0 0 18 25"><path d="M5.500 1H12.500V15.500H5.500ZM1.500 12V17Q2 19.500 5 19.500H13Q16 19.500 16.500 17V12M9 19.500V23.500M5 23.800H13" stroke="#a5a5a5" strokeWidth="1.500" /></Svg>
        </Search>
        <TaskButton $w={77} $nudge={-1}><TaskViewIcon /></TaskButton>
        <TaskButton $w={75} $open $inset={6}><EdgeIcon /></TaskButton>
        <TaskButton $w={73} $open $active>
          <Reflection $x={59} $y={39} $o={0.12}><ChromeIcon /></Reflection>
          <ChromeIcon />
        </TaskButton>
        <TaskButton $w={75}><EclipseIcon /></TaskButton>
        <TaskButton $w={75} $open><WebStormIcon /></TaskButton>
        <TaskButton $w={75} $open><FolderIcon /></TaskButton>
        <TaskButton $w={75} $open $nudge={5}><SkypeIcon /></TaskButton>
        <TaskButton $w={75} $open><JavaIcon /></TaskButton>
        <Tray>
          <TrayIcon $w={35}><ChevronIcon /></TrayIcon>
          <TrayIcon $w={34}><SphereIcon /></TrayIcon>
          <TrayIcon $w={37}><CloudIcon /></TrayIcon>
          <TrayIcon $w={37}><BatteryIcon /></TrayIcon>
          <TrayIcon $w={37}><VolumeIcon /></TrayIcon>
          <TrayText $w={38} $ls={-0.3} $size={17}>ENG<br />INTL</TrayText>
          <TrayText $w={130} $ls={0.05} $size={17.5} $pad={9}>12:18 PM<br />11/19/2017</TrayText>
          <TrayIcon $w={54}><NoticeIcon /></TrayIcon>
          <ShowDesktop />
        </Tray>
      </Taskbar>
    </Screen>
  );
}
